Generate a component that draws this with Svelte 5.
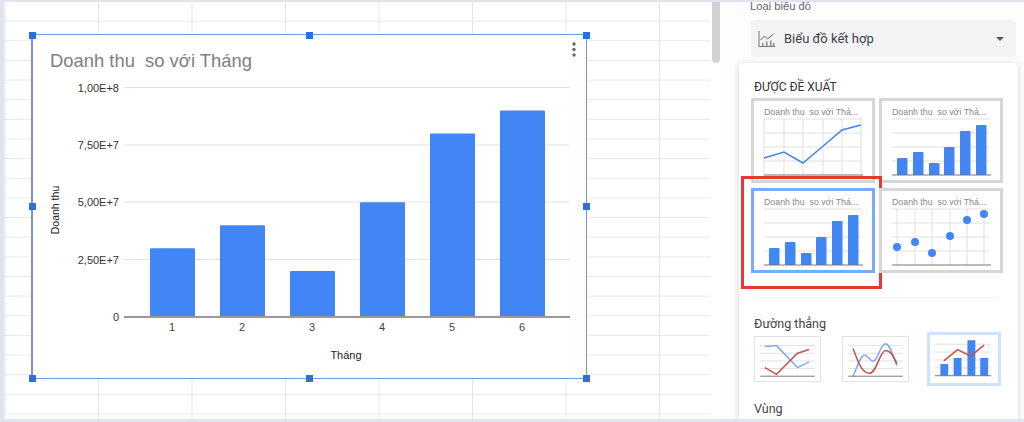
<script>
  const gridY = [87.5, 145, 202, 259.5];
  const ticks = ['1,00E+8', '7,50E+7', '5,00E+7', '2,50E+7'];
  const values = [3, 4, 2, 5, 8, 9];
  const baseY = 317;
  const barTop = (v) => baseY - v * 22.95;

  const thumbBars = [
    [18, 60], [34, 54], [50, 65], [65, 49], [81, 33], [97, 27]
  ];
  const dots = [
    [18, 59], [36, 54], [53, 65], [71, 48], [88, 32], [105, 26]
  ];
  const linePts = '13,60 33,54 52,65 71,49 91,32 110,27';
  const handles = [
    [0, 0], [50, 0], [100, 0],
    [0, 50], [100, 50],
    [0, 100], [50, 100], [100, 100]
  ];
</script>

{#snippet thumb(kind, selected = false)}
  <div class="thumb" class:selected>
    <svg viewBox="0 0 124 85" width="124" height="85">
      <text class="thumb-title" x="13" y="17">Doanh thu  so với Thá...</text>
      {#each [21, 35, 49, 63] as y}
        <line x1="13" x2="111" y1={y} y2={y} class="thumb-grid" />
      {/each}
      {#if kind === 'line'}
        {#each [13, 33, 52, 72, 91, 110] as x}
          <line x1={x} x2={x} y1="21" y2="77" class="thumb-grid" />
        {/each}
        <polyline points={linePts} class="thumb-line" />
      {:else if kind === 'bars'}
        {#each thumbBars as [x, y]}
          <path d="M{x} 77V{y + 1}q0-1 1-1h8.5q1 0 1 1V77z" fill="#4285f4" />
        {/each}
      {:else}
        {#each dots as [x]}
          <line x1={x} x2={x} y1="21" y2="77" class="thumb-grid" />
        {/each}
        {#each dots as [x, y]}
          <circle cx={x} cy={y} r="4" fill="#4285f4" />
        {/each}
      {/if}
      <line x1="13" x2="112" y1="77" y2="77" stroke="#777" stroke-width="1" />
    </svg>
    {#if selected}
      <span class="marker"></span>
    {/if}
  </div>
{/snippet}

<div class="page">
  <div class="sheet">
    <div class="chart">
      <svg viewBox="32 35 554 343" width="554" height="343">
        <text class="title" x="50" y="67">Doanh thu  so với Tháng</text>

        {#each gridY as y, i}
          <line x1="124" x2="570" y1={y} y2={y} stroke="#e2e2e2" stroke-width="1" />
          <text class="tick" x="119" y={y + 4}>{ticks[i]}</text>
        {/each}
        <text class="tick" x="119" y="321">0</text>

        {#each values as v, i}
          <path
            d="M{150 + i * 70} {baseY}V{barTop(v) + 1}q0-1 1-1h43q1 0 1 1V{baseY}z"
            fill="#4285f4"
          />
          <text class="cat" x={172 + i * 70} y="331">{i + 1}</text>
        {/each}
        <line x1="124" x2="570" y1={baseY} y2={baseY} stroke="#999" stroke-width="2" />

        <text class="axis" x="346" y="359">Tháng</text>
        <text class="axis side" transform="translate(59 210) rotate(-90)">Doanh thu</text>

        <circle cx="574" cy="44" r="1.7" fill="#666" />
        <circle cx="574" cy="49.5" r="1.7" fill="#666" />
        <circle cx="574" cy="55" r="1.7" fill="#666" />
      </svg>
      {#each handles as [x, y]}
        <span class="handle" style="left: {x}%; top: {y}%"></span>
      {/each}
    </div>
  </div>

  <div class="scroll"><div class="scroll-thumb"></div></div>

  <aside class="panel">
    <div class="label">Loại biểu đồ</div>
    <div class="select">
      <svg class="select-icon" viewBox="0 0 18 18" width="18" height="18">
        <path d="M1 1v15.5h16" fill="none" stroke="#777" stroke-width="1" />
        <path d="M2.5 10l4-4 3 3 6-5" fill="none" stroke="#666" stroke-width="1" />
        <path d="M4 16v-3h1.5v3zM8 16v-4.5h1.5V16zM12 16v-5.5h1.5V16zM15 16v-3h1.5v3z" fill="#888" />
      </svg>
      <span class="select-text">Biểu đồ kết hợp</span>
      <span class="caret"></span>
    </div>

    <div class="card">
      <div class="heading">ĐƯỢC ĐỀ XUẤT</div>
      <div class="thumbs">
        {@render thumb('line')}
        {@render thumb('bars')}
        {@render thumb('bars', true)}
        {@render thumb('dots')}
      </div>
      <hr />

      <div class="group">Đường thẳng</div>
      <div class="mini-row">
        <div class="mini">
          <svg viewBox="0 0 67 46" width="65" height="44">
            {#each [9, 17, 25, 33] as y}
              <line x1="5" x2="62" y1={y} y2={y} class="thumb-grid" />
            {/each}
            <polyline points="10,10 22,9 44,32 56,26" class="mini-blue" />
            <polyline points="10,32 22,39 44,17 56,13" class="mini-red" />
            <line x1="5" x2="62" y1="41" y2="41" stroke="#777" />
          </svg>
        </div>
        <div class="mini">
          <svg viewBox="0 0 67 46" width="65" height="44">
            {#each [9, 17, 25, 33] as y}
              <line x1="5" x2="62" y1={y} y2={y} class="thumb-grid" />
            {/each}
            <path d="M10 41C15 30 18 19 22 19S28 27 32 25 39 7 44 7 52 22 56 30" class="mini-blue" />
            <path d="M10 12C15 25 19 38 27 38S38 14 44 14 53 22 56 28" class="mini-red" />
            <line x1="5" x2="62" y1="41" y2="41" stroke="#777" />
          </svg>
        </div>
        <div class="mini active">
          <svg viewBox="3 4 67 46" width="66" height="46">
            {#each [13, 21, 29, 37] as y}
              <line x1="8" x2="65" y1={y} y2={y} class="thumb-grid" />
            {/each}
            <path d="M13.5 45V33h8v12zM27 45V27h8v18zM41 45V9h8v36zM54 45V27h8v18z" fill="#4285f4" />
            <polyline points="17,30 31,18.5 44,25 58,14" class="mini-red" />
            <line x1="8" x2="65" y1="45" y2="45" stroke="#777" />
          </svg>
        </div>
      </div>

      <div class="group area">Vùng</div>
      <div class="mini-row">
        <div class="mini"></div>
        <div class="mini"></div>
        <div class="mini"></div>
      </div>
    </div>
  </aside>
</div>

<style>
  :global(body) {
    margin: 0;
    background: #fff;
  }

  .page {
    display: flex;
    box-sizing: border-box;
    width: 1024px;
    height: 422px;
    overflow: hidden;
    border-top: 2px solid #dfe4f0;
    border-left: 4px solid #dfe4f0;
    border-bottom: 3px solid #dfe4f0;
    font-family: "Liberation Sans", Arial, sans-serif;
    background: #fff;
  }

  .sheet {
    position: relative;
    flex: none;
    width: 706px;
    background-image:
      linear-gradient(to left, #e6e6e6 1px, transparent 1px),
      linear-gradient(to top, #e8e8e8 1px, transparent 1px);
    background-size: 93.5px 100%, 100% 19.65px;
    background-position: 1.5px 0, 0 0;
  }

  .chart {
    position: absolute;
    left: 28px;
    top: 33px;
    width: 554px;
    height: 343px;
    background: #fff;
    box-shadow: 0 0 0 1px #7196dd, inset 1px 0 0 #7196dd;
  }

  .chart svg {
    display: block;
  }

  .title {
    font-size: 18.4px;
    fill: #808080;
    white-space: pre;
  }

  .tick {
    font-size: 11px;
    fill: #333;
    text-anchor: end;
  }

  .cat {
    font-size: 11px;
    fill: #444;
    text-anchor: middle;
  }

  .axis {
    font-size: 11px;
    fill: #222;
    text-anchor: middle;
  }

  .axis.side {
    font-size: 10.5px;
  }

  .handle {
    position: absolute;
    width: 7px;
    height: 7px;
    margin: -3.5px 0 0 -3.5px;
    background: #2f6fdc;
  }

  .scroll {
    flex: none;
    width: 10px;
    padding-left: 2px;
    box-sizing: border-box;
  }

  .scroll-thumb {
    width: 8px;
    height: 61px;
    background: #d2d2d2;
    border-radius: 0 0 4px 4px;
  }

  .panel {
    flex: 1;
    min-width: 0;
    overflow: hidden;
    background: #fdfdfd;
  }

  .label {
    margin: -3px 0 0 30px;
    font-size: 11.2px;
    line-height: 14px;
    color: #666;
  }

  .select {
    display: flex;
    align-items: center;
    width: 265px;
    height: 37px;
    margin: 7px 0 0 31px;
    background: #f1f3f4;
    border-radius: 4px;
  }

  .select-icon {
    margin-left: 7px;
  }

  .select-text {
    margin-left: 8px;
    font-family: Roboto, sans-serif;
    font-size: 13px;
    color: #3c4043;
  }

  .caret {
    margin-left: auto;
    margin-right: 12px;
    border: 4px solid transparent;
    border-top: 4px solid #555;
    border-bottom: 0;
  }

  .card {
    width: 279px;
    height: 360px;
    margin: 6px 0 0 19px;
    padding: 16px 0 0 12px;
    box-sizing: border-box;
    background: #fff;
    border-radius: 3px;
    box-shadow: 0 1px 6px rgba(60, 64, 67, 0.22);
  }

  .heading {
    margin-left: 3px;
    font-family: Roboto, sans-serif;
    font-size: 12px;
    line-height: 16px;
    color: #333;
  }

  .thumbs {
    display: grid;
    grid-template-columns: repeat(2, 124px);
    grid-auto-rows: 85px;
    gap: 5px 4px;
    margin-top: 3px;
  }

  .thumb {
    position: relative;
    box-sizing: border-box;
    outline: 3px solid #d6d6d6;
    outline-offset: -3px;
    background: #fff;
  }

  .thumb svg {
    display: block;
  }

  .thumb.selected {
    outline-color: #7baaf7;
  }

  .marker {
    position: absolute;
    left: -10px;
    top: -12px;
    width: 135px;
    height: 107px;
    border: 3px solid #e53935;
  }

  .thumb-title {
    font-size: 8.8px;
    fill: #888;
    white-space: pre;
  }

  .thumb-grid {
    stroke: #e0e0e0;
    stroke-width: 1;
  }

  .thumb-line {
    fill: none;
    stroke: #4285f4;
    stroke-width: 1.6;
  }

  hr {
    width: 244px;
    height: 1px;
    margin: 24px 0 0 3px;
    border: 0;
    background: #efefef;
  }

  .group {
    margin: 18px 0 0 3px;
    font-family: Roboto, sans-serif;
    font-size: 12.5px;
    line-height: 16px;
    color: #444;
  }

  .group.area {
    margin-top: 15px;
  }

  .mini-row {
    display: flex;
    align-items: center;
    gap: 21px;
    margin: 0 0 0 3px;
    height: 54px;
  }

  .mini {
    flex: none;
    width: 67px;
    height: 46px;
    box-sizing: border-box;
    border: 1px solid #e3e3e3;
  }

  .mini.active {
    width: 74px;
    height: 54px;
    margin-left: -3px;
    border: 3px solid #cfe2fb;
    overflow: hidden;
  }

  .mini svg {
    display: block;
  }

  .mini-blue {
    fill: none;
    stroke: #7baaf7;
    stroke-width: 1.6;
  }

  .mini-red {
    fill: none;
    stroke: #c9524a;
    stroke-width: 1.6;
  }
</style>
